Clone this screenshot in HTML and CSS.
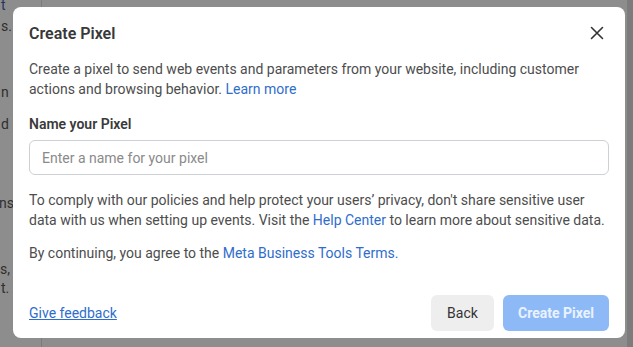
FILE: index.html
```html
<!DOCTYPE html>
<html lang="en">
<head>
<meta charset="utf-8">
<title>Create Pixel</title>
<link rel="stylesheet" href="styles.css">
</head>
<body>
<div class="page">
  <div class="side">
    <span class="frag f1">t</span>
    <span class="frag f2">s.</span>
    <span class="frag f3">n</span>
    <span class="frag f4">d</span>
    <span class="frag f5">ns</span>
    <span class="frag f6">s,</span>
    <span class="frag f7">t.</span>
  </div>
  <div class="main"></div>
  <div class="scroll"></div>
</div>

<div class="dialog" role="dialog" aria-labelledby="dlg-title">
  <header class="dialog-header">
    <h2 id="dlg-title" class="dialog-title">Create Pixel</h2>
    <button class="close" aria-label="Close">
      <svg width="14" height="14" viewBox="0 0 14 14"><path d="M1.5 1.5 L12.5 12.5 M12.5 1.5 L1.5 12.5" stroke="#333" stroke-width="1.6" stroke-linecap="round"/></svg>
    </button>
  </header>
  <div class="dialog-body">
    <p class="text">Create a pixel to send web events and parameters from your website, including customer actions and browsing behavior. <a href="#" class="link">Learn more</a></p>
    <label class="label" for="pixel-name">Name your Pixel</label>
    <input id="pixel-name" class="input" type="text" placeholder="Enter a name for your pixel">
    <p class="text policy">To comply with our policies and help protect your users’ privacy, don't share sensitive user data with us when setting up events. Visit the <a href="#" class="link">Help Center</a> to learn more about sensitive data.</p>
    <p class="text terms">By continuing, you agree to the <a href="#" class="link">Meta Business Tools Terms.</a></p>
  </div>
  <footer class="dialog-footer">
    <a href="#" class="feedback">Give feedback</a>
    <div class="actions">
      <button class="btn btn-back">Back</button>
      <button class="btn btn-primary" disabled>Create Pixel</button>
    </div>
  </footer>
</div>
</body>
</html>
```

FILE: styles.css
```css
* { box-sizing: border-box; }
html, body {
  margin: 0;
  padding: 0;
  width: 633px;
  height: 347px;
  overflow: hidden;
  font-family: Roboto, "Liberation Sans", Arial, sans-serif;
}
body { background: #8d8d8d; position: relative; }

.page {
  display: flex;
  height: 347px;
}
.side {
  width: 42px;
  border-right: 1px solid #7b7b7b;
  display: flex;
  flex-direction: column;
  font-size: 14px;
  line-height: 19px;
  color: #2f2f2f;
  padding-left: 1px;
}
.frag { display: block; }
.f1 { margin-top: -4px; color: #24375a; }
.f2 { margin-top: 2px; }
.f3 { margin-top: 47px; }
.f4 { margin-top: 13px; }
.f5 { margin-top: 60px; margin-left: -2px; }
.f6 { margin-top: 47px; margin-left: -1px; }
.f7 { margin-top: 0; }
.main { flex: 1; }
.scroll { width: 6px; background: #7c7c7c; }

.dialog {
  position: absolute;
  left: 13px;
  top: 7px;
  width: 612px;
  height: 331px;
  background: #fff;
  border-radius: 8px;
  display: flex;
  flex-direction: column;
}
.dialog-header {
  height: 52px;
  display: flex;
  align-items: center;
  justify-content: space-between;
  padding: 0 16px 0 16px;
}
.dialog-title {
  margin: 0;
  font-size: 16px;
  font-weight: 600;
  color: #383838;
}
.close {
  border: 0;
  background: none;
  padding: 0;
  width: 14px;
  height: 14px;
  margin-right: 5px;
  display: flex;
}
.dialog-body {
  padding: 0 16px;
  display: flex;
  flex-direction: column;
}
.text {
  margin: 0;
  font-size: 14px;
  line-height: 20px;
  color: #4d4d4d;
}
.link { color: #2f6dcc; text-decoration: none; }
.label {
  margin-top: 15px;
  font-size: 14px;
  line-height: 20px;
  font-weight: 600;
  color: #3a3a3a;
}
.input {
  margin-top: 6px;
  height: 35px;
  width: 100%;
  border: 1px solid #cdd0d4;
  border-radius: 6px;
  padding: 0 12px;
  font-family: inherit;
  font-size: 14px;
  color: #333;
}
.input::placeholder { color: #8a8a8a; }
.policy { margin-top: 15px; }
.terms { margin-top: 13px; }

.dialog-footer {
  margin-top: auto;
  padding: 0 16px 7px 16px;
  display: flex;
  align-items: center;
  justify-content: space-between;
}
.feedback {
  font-size: 14px;
  color: #2f6dcc;
  text-decoration: underline;
}
.actions { display: flex; gap: 9px; }
.btn {
  height: 36px;
  border: 0;
  border-radius: 6px;
  font-family: inherit;
  font-size: 14px;
  padding: 0;
  white-space: nowrap;
}
.btn-back { background: #eeeeee; color: #333; width: 63px; }
.btn-primary { background: #8dbaf6; color: #e9f2fe; font-weight: 700; width: 106px; }
```
